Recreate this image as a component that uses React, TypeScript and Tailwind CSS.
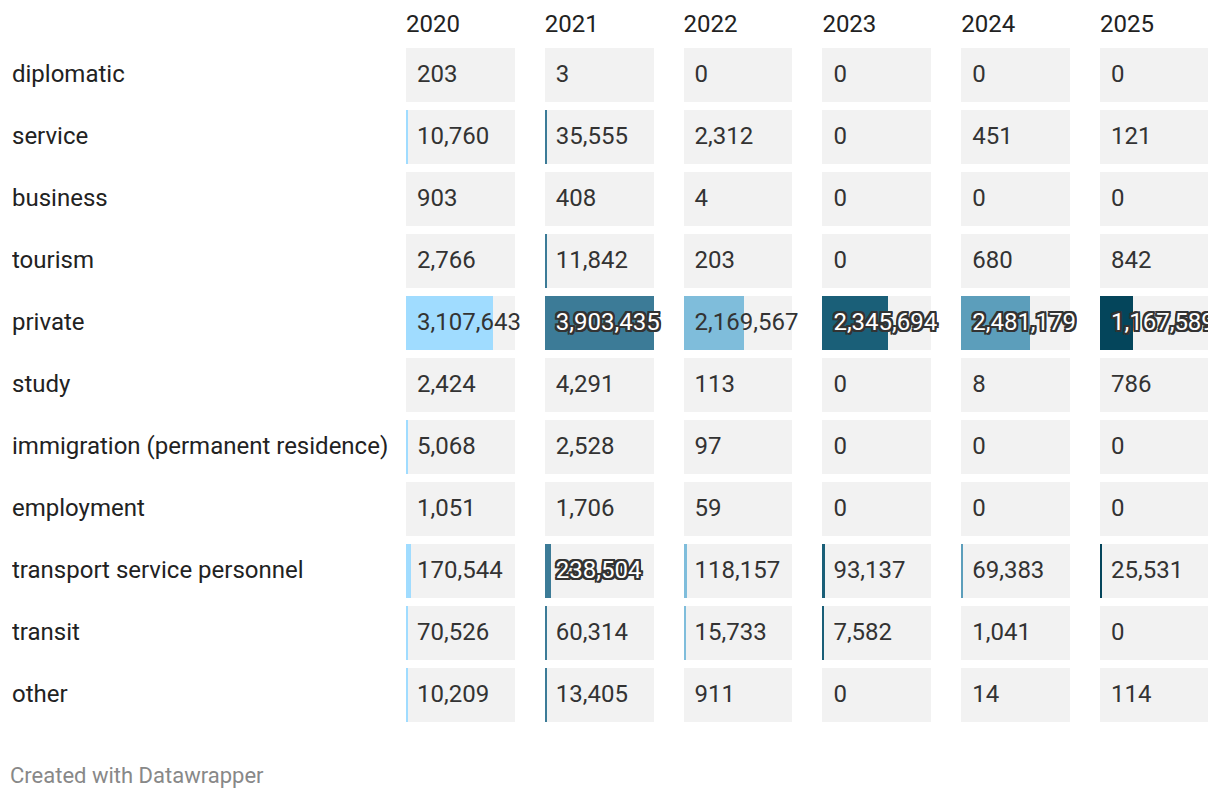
import React from "react";

const YEARS = ["2020", "2021", "2022", "2023", "2024", "2025"];

// per-year bar colours, matching the Datawrapper palette
const BAR = ["bg-[#a0dcff]", "bg-[#3c7b97]", "bg-[#7fbddb]", "bg-[#1a5f78]", "bg-[#5c9ebb]", "bg-[#04455b]"];

type Row = { label: string; values: number[]; halo?: number[] };

const ROWS: Row[] = [
  { label: "diplomatic", values: [203, 3, 0, 0, 0, 0] },
  { label: "service", values: [10760, 35555, 2312, 0, 451, 121] },
  { label: "business", values: [903, 408, 4, 0, 0, 0] },
  { label: "tourism", values: [2766, 11842, 203, 0, 680, 842] },
  { label: "private", values: [3107643, 3903435, 2169567, 2345694, 2481179, 1167589], halo: [1, 3, 4, 5] },
  { label: "study", values: [2424, 4291, 113, 0, 8, 786] },
  { label: "immigration (permanent residence)", values: [5068, 2528, 97, 0, 0, 0] },
  { label: "employment", values: [1051, 1706, 59, 0, 0, 0] },
  { label: "transport service personnel", values: [170544, 238504, 118157, 93137, 69383, 25531], halo: [1] },
  { label: "transit", values: [70526, 60314, 15733, 7582, 1041, 0] },
  { label: "other", values: [10209, 13405, 911, 0, 14, 114] },
];

const MAX = 3903435;
const fmt = (n: number) => n.toLocaleString("en-US");

const GRID = "grid grid-cols-[364px_repeat(6,108.8px)] gap-x-[30px]";
const HALO =
  "text-white [text-shadow:-2px_-2px_0_#333,2px_-2px_0_#333,-2px_2px_0_#333,2px_2px_0_#333,0_2px_0_#333,0_-2px_0_#333,2px_0_0_#333,-2px_0_0_#333,-1px_-2px_0_#333,1px_2px_0_#333,-2px_1px_0_#333,2px_-1px_0_#333]";

function Cell({ value, col, halo }: { value: number; col: number; halo: boolean }) {
  const pct = (value / MAX) * 100;
  const width = value >= 5000 ? `max(${pct}%, 2px)` : "0px";
  return (
    <div className="relative h-[54px] bg-[#f2f2f2]">
      <div className={`absolute left-0 top-0 h-full ${BAR[col]}`} style={{ width }} />
      <div
        className={`relative flex h-full items-center whitespace-nowrap pb-[2px] pl-[11px] ${halo ? HALO : "text-[#333]"}`}
      >
        {fmt(value)}
      </div>
    </div>
  );
}

export default function App() {
  return (
    <div className="min-h-[798px] bg-white pl-[12px] font-['Roboto',sans-serif] text-[#222]">
      <div className="w-[1196px] overflow-hidden">
        <div className={`${GRID} h-[48px] items-center text-[24px]`}>
          <div />
          {YEARS.map((y) => (
            <div key={y}>{y}</div>
          ))}
        </div>
        <div className="flex flex-col gap-[8px] text-[24px]">
          {ROWS.map((r) => (
            <div key={r.label} className={`${GRID} items-center`}>
              <div className="whitespace-nowrap pb-[2px]">{r.label}</div>
              {r.values.map((v, i) => (
                <Cell key={i} value={v} col={i} halo={!!r.halo?.includes(i)} />
              ))}
            </div>
          ))}
        </div>
      </div>
      <div className="ml-[-2px] mt-[37px] text-[22px] text-[#888]">Created with Datawrapper</div>
    </div>
  );
}
